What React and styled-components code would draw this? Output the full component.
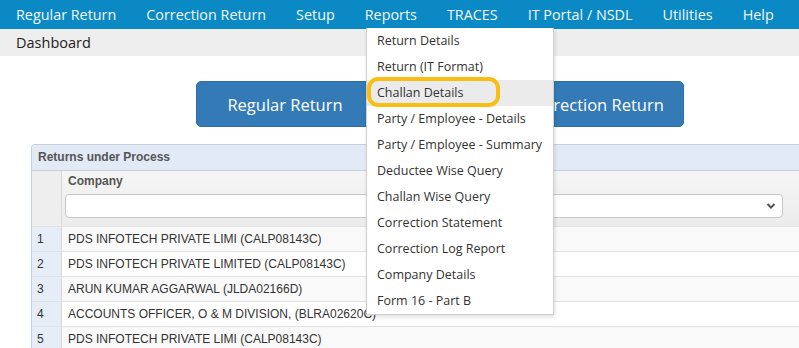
import React from 'react';
import styled, { createGlobalStyle } from 'styled-components';

const GlobalStyle = createGlobalStyle`
  html, body {
    margin: 0;
    padding: 0;
    background: #fff;
    overflow: hidden;
  }
  body {
    font-family: "Open Sans", "Noto Sans", sans-serif;
  }
`;

const Page = styled.div`
  width: 799px;
  height: 348px;
  position: relative;
  overflow: hidden;
`;

const NavBar = styled.div`
  display: flex;
  align-items: center;
  height: 29px;
  background: #0a89c4;
  padding-left: 1px;
`;

const NavItem = styled.div`
  position: relative;
  padding: 0 15px;
  color: #f2f8fb;
  font-size: 14.36px;
  line-height: 29px;
  white-space: nowrap;
`;

const SubBar = styled.div`
  height: 27px;
  background: #eeeeee;
  padding-left: 16px;
  color: #222;
  font-size: 14.5px;
  line-height: 27px;
`;

const ButtonRow = styled.div`
  display: flex;
  gap: 132px;
  padding: 25px 0 0 196px;
  height: 46px;
`;

const BigButton = styled.div`
  width: 178px;
  height: 46px;
  border-radius: 5px;
  background: #337ab7;
  border: 1px solid #2e6da4;
  box-sizing: border-box;
  color: #fff;
  font-size: 16.5px;
  display: flex;
  align-items: center;
  justify-content: center;
`;

const Grid = styled.div`
  margin: 17px 0 0 31px;
  width: 790px;
  border: 1px solid #c5d0dc;
  border-right: none;
  border-radius: 4px 0 0 0;
  font-family: "Liberation Sans", Arial, sans-serif;
  font-size: 12px;
`;

const Caption = styled.div`
  height: 25px;
  line-height: 25px;
  background: #e2eaf5;
  border-bottom: 1px solid #c5d0dc;
  padding-left: 6px;
  font-weight: bold;
  color: #555;
  border-radius: 4px 0 0 0;
`;

const Row = styled.div`
  display: flex;
  height: ${p => p.$h || 25}px;
  background: ${p => p.$bg || '#fff'};
  border-bottom: 1px solid #e2e2e2;
  box-sizing: border-box;
`;

const NumCell = styled.div`
  width: 30px;
  flex: none;
  background: ${p => (p.$head ? '#eeeeee' : '#e7edf6')};
  border-right: 1px solid #d4d9df;
  color: #333;
  padding-left: 5px;
  box-sizing: border-box;
  line-height: 24px;
`;

const HeadCell = styled.div`
  flex: 1;
  background: linear-gradient(#f5f5f5, #ececec);
  padding: 3px 0 0 3px;
`;

const HeadLabel = styled.div`
  font-weight: bold;
  color: #555;
  padding-left: 3px;
  height: 19px;
`;

const SelectBox = styled.div`
  width: 718px;
  height: 24px;
  margin-top: 1px;
  background: #fff;
  border: 1px solid #c8c8c8;
  border-radius: 4px;
  box-sizing: border-box;
  display: flex;
  align-items: center;
  justify-content: flex-end;
  padding-right: 6px;
`;

const Cell = styled.div`
  flex: 1;
  padding-left: 6px;
  color: #333;
  line-height: 24px;
  white-space: nowrap;
`;

const Menu = styled.div`
  position: absolute;
  left: 366px;
  top: 28px;
  width: 188px;
  background: #fff;
  border: 1px solid #cfcfcf;
  border-top: none;
  box-sizing: border-box;
  box-shadow: 1px 2px 4px rgba(0, 0, 0, 0.12);
  z-index: 5;
`;

const MenuItem = styled.div`
  position: relative;
  height: 26px;
  line-height: 26px;
  padding-left: 10px;
  font-size: 12.5px;
  color: #333;
  white-space: nowrap;
  background: ${p => (p.$active ? '#ebebeb' : 'transparent')};
`;

const Marker = styled.div`
  position: absolute;
  left: 0px;
  top: -3px;
  width: 133px;
  height: 30px;
  border: 4px solid #f8bf12;
  border-radius: 11px;
  box-sizing: border-box;
`;

const navItems = ['Regular Return', 'Correction Return', 'Setup', 'Reports', 'TRACES', 'IT Portal / NSDL', 'Utilities', 'Help'];

const menuItems = [
  'Return Details',
  'Return (IT Format)',
  'Challan Details',
  'Party / Employee - Details',
  'Party / Employee - Summary',
  'Deductee Wise Query',
  'Challan Wise Query',
  'Correction Statement',
  'Correction Log Report',
  'Company Details',
  'Form 16 - Part B',
];

const rows = [
  'PDS INFOTECH PRIVATE LIMI (CALP08143C)',
  'PDS INFOTECH PRIVATE LIMITED (CALP08143C)',
  'ARUN KUMAR AGGARWAL (JLDA02166D)',
  'ACCOUNTS OFFICER, O & M DIVISION, (BLRA02620C)',
  'PDS INFOTECH PRIVATE LIMI (CALP08143C)',
];

function Chevron() {
  return (
    <svg width="10" height="8" viewBox="0 0 10 8">
      <path d="M1.5 2 L5 5.5 L8.5 2" fill="none" stroke="#555" strokeWidth="2" />
    </svg>
  );
}

export default function App() {
  return (
    <Page>
      <GlobalStyle />
      <NavBar>
        {navItems.map(n => (
          <NavItem key={n}>{n}</NavItem>
        ))}
      </NavBar>
      <SubBar>Dashboard</SubBar>
      <ButtonRow>
        <BigButton>Regular Return</BigButton>
        <BigButton>Correction Return</BigButton>
      </ButtonRow>
      <Grid>
        <Caption>Returns under Process</Caption>
        <Row $h={56} $bg="#eee">
          <NumCell $head />
          <HeadCell>
            <HeadLabel>Company</HeadLabel>
            <SelectBox>
              <Chevron />
            </SelectBox>
          </HeadCell>
        </Row>
        {rows.map((r, i) => (
          <Row key={i} $bg={i % 2 === 0 ? '#f9f9f9' : '#fff'}>
            <NumCell>{i + 1}</NumCell>
            <Cell>{r}</Cell>
          </Row>
        ))}
      </Grid>
      <Menu>
        {menuItems.map(m => (
          <MenuItem key={m} $active={m === 'Challan Details'}>
            {m}
            {m === 'Challan Details' && <Marker />}
          </MenuItem>
        ))}
      </Menu>
    </Page>
  );
}
